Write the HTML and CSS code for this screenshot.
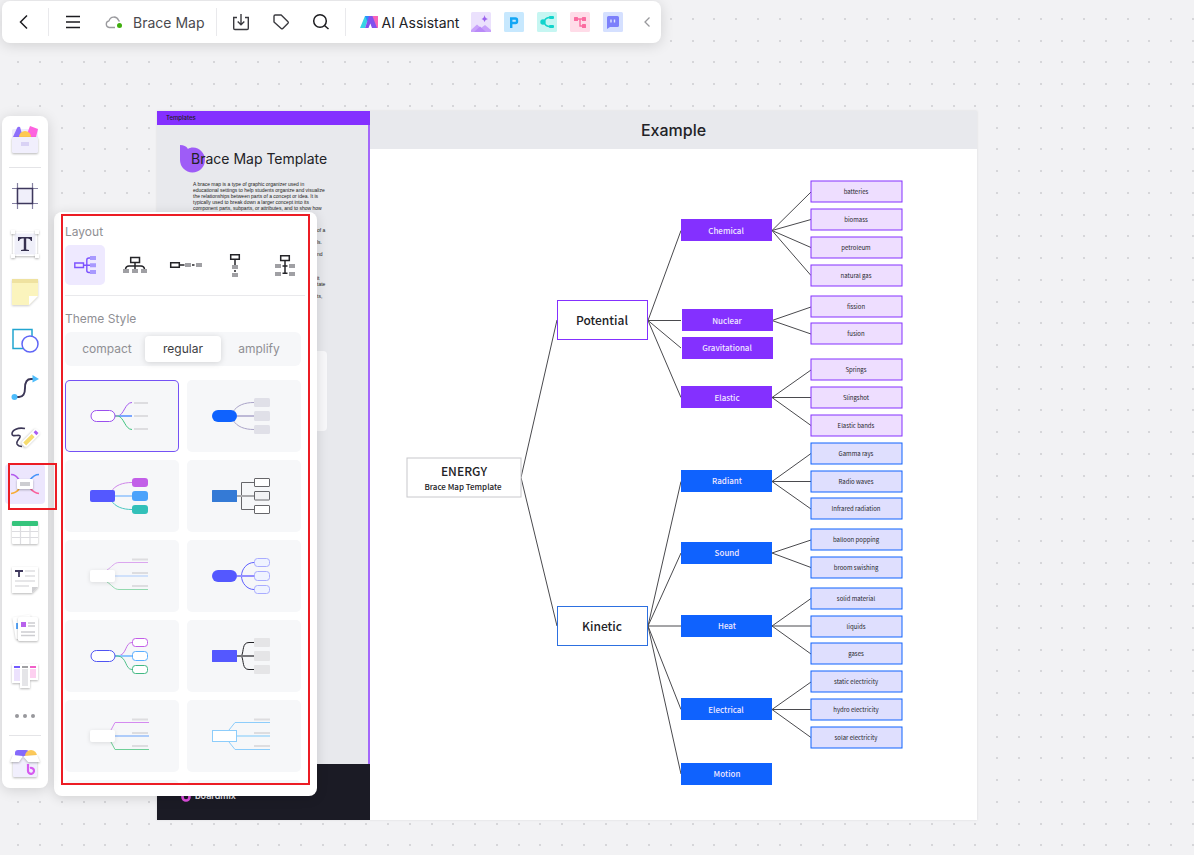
FILE: index.html
```html
<!DOCTYPE html>
<html lang="en">
<head>
<meta charset="utf-8">
<title>Brace Map</title>
<link rel="stylesheet" href="styles.css">
</head>
<body>
<main class="canvas">
  <svg class="dots" aria-hidden="true">
    <defs>
      <pattern id="grid" x="-26" y="18" width="87" height="87" patternUnits="userSpaceOnUse">
        <path d="M0 1h2M22 1h2M43 1h2M65 1h2M0 23h2M22 23h2M43 23h2M65 23h2M0 44h2M22 44h2M43 44h2M65 44h2M0 66h2M22 66h2M43 66h2M65 66h2" stroke="#d6d6d9" stroke-width="2"/>
      </pattern>
    </defs>
    <rect width="100%" height="100%" fill="url(#grid)"/>
  </svg>

  <section class="board">
    <article class="template">
      <div class="template-tag">Templates</div>
      <div class="template-body">
        <header class="template-head">
          <svg class="template-mark" width="26" height="28" viewBox="0 0 26 28"><path d="M0 0C4 0 6 1 8 4C9 3 11 2.500 13 2.500A12.500 12.500 0 1 1 0 15Z" fill="#9e5cf7"/></svg>
          <h1 class="template-title">Brace Map Template</h1>
        </header>
        <p class="template-text">A brace map is a type of graphic organizer used in<br>educational settings to help students organize and visualize<br>the relationships between parts of a concept or idea. It is<br>typically used to break down a larger concept into its<br>component parts, subparts, or attributes, and to show how</p>
        <p class="template-more">of a<br><br>ls.<br><br>nd<br><br><br><br>it<br>tate<br><br>ts,</p>
        <div class="template-card"></div>
      </div>
      <footer class="template-foot">
        <svg width="10" height="14" viewBox="0 0 10 14"><path d="M1.500 0V9A3.500 3.500 0 0 0 8.500 9A3.500 3.500 0 0 0 4 5.800" fill="none" stroke="#e04fe0" stroke-width="2.600"/><path d="M1.500 0V8" stroke="#8a4dff" stroke-width="2.600"/></svg>
        <span>boardmix</span>
      </footer>
    </article>
    <article class="example">
      <h2 class="example-title">Example</h2>
      <svg class="diagram" viewBox="370 149 607 671" width="607" height="671">
        <g class="links">
          <path d="M521 477.500L557 320M521 477.500L557 626"/>
          <path d="M648 320.500L681 230.500M648 320.500H681M648 320.500L681 348M648 320.500L681 397.500"/>
          <path d="M648 626L681 481.500M648 626L681 553M648 626H681M648 626L681 709.500M648 626L681 774"/>
          <path d="M772 230.500L811 192M772 230.500L811 219.500M772 230.500L811 247.500M772 230.500L811 275.500"/>
          <path d="M772 320.500L811 307M772 320.500L811 334"/>
          <path d="M772 397.500L811 370M772 397.500H811M772 397.500L811 425.500"/>
          <path d="M772 481.500L811 453.500M772 481.500H811M772 481.500L811 509"/>
          <path d="M772 553L811 540M772 553L811 567.500"/>
          <path d="M772 626L811 598.500M772 626H811M772 626L811 654"/>
          <path d="M772 709.500L811 682M772 709.500H811M772 709.500L811 737.500"/>
        </g>
        <g class="root"><rect x="407" y="458"/><text class="root-name" x="464" y="476">ENERGY</text><text class="root-sub" x="463" y="490">Brace Map Template</text></g>
        <g class="kind kind-purple"><rect x="557.500" y="300.500"/><text x="602" y="325">Potential</text></g>
        <g class="kind kind-blue"><rect x="557.500" y="606.500"/><text x="602" y="631">Kinetic</text></g>
        <g class="mid mid-purple">
          <rect x="681" y="219"/><text x="726" y="234">Chemical</text>
          <rect x="682" y="309"/><text x="727" y="324">Nuclear</text>
          <rect x="682" y="337"/><text x="727" y="351">Gravitational</text>
          <rect x="681" y="386"/><text x="727" y="401">Elastic</text>
        </g>
        <g class="mid mid-blue">
          <rect x="681" y="470"/><text x="727" y="484">Radiant</text>
          <rect x="681" y="542"/><text x="727" y="556">Sound</text>
          <rect x="681" y="615"/><text x="727" y="629">Heat</text>
          <rect x="681" y="698"/><text x="726" y="713">Electrical</text>
          <rect x="681" y="763"/><text x="727" y="777">Motion</text>
        </g>
        <g class="leaf leaf-purple">
          <rect x="811" y="181"/><text x="856" y="194">batteries</text>
          <rect x="811" y="209"/><text x="856" y="222">biomass</text>
          <rect x="811" y="237"/><text x="856" y="250">petroleum</text>
          <rect x="811" y="265"/><text x="856" y="278">natural gas</text>
          <rect x="811" y="296"/><text x="856" y="309">fission</text>
          <rect x="811" y="323"/><text x="856" y="336">fusion</text>
          <rect x="811" y="359"/><text x="856" y="372">Springs</text>
          <rect x="811" y="387"/><text x="856" y="400">Slingshot</text>
          <rect x="811" y="415"/><text x="856" y="428">Elastic bands</text>
        </g>
        <g class="leaf leaf-blue">
          <rect x="811" y="443"/><text x="856" y="456">Gamma rays</text>
          <rect x="811" y="471"/><text x="856" y="484">Radio waves</text>
          <rect x="811" y="498"/><text x="856" y="511">Infrared radiation</text>
          <rect x="811" y="529"/><text x="856" y="542">balloon popping</text>
          <rect x="811" y="557"/><text x="856" y="570">broom swishing</text>
          <rect x="811" y="588"/><text x="856" y="601">solid material</text>
          <rect x="811" y="616"/><text x="856" y="629">liquids</text>
          <rect x="811" y="643"/><text x="856" y="656">gases</text>
          <rect x="811" y="671"/><text x="856" y="684">static electricity</text>
          <rect x="811" y="699"/><text x="856" y="712">hydro electricity</text>
          <rect x="811" y="727"/><text x="856" y="740">solar electricity</text>
        </g>
      </svg>
    </article>
  </section>

  <header class="topbar">
    <button class="top-btn back" aria-label="Back"><svg width="20" height="20" viewBox="0 0 20 20"><path d="M13 3.500L6.500 10L13 16.500" class="ink"/></svg></button>
    <span class="vline"></span>
    <button class="top-btn" aria-label="Menu"><svg width="16" height="16" viewBox="0 0 16 16"><path d="M1 2.500H15M1 8H15M1 13.500H15" class="ink"/></svg></button>
    <button class="file"><svg width="18" height="18" viewBox="0 0 18 18"><path d="M10 14.500H4.200A3.400 3.400 0 0 1 4 7.800A5 5 0 0 1 13.500 7.200L14.500 8.500" fill="none" stroke="#9a9a9e" stroke-width="1.300"/><circle cx="14.500" cy="12.500" r="2.500" fill="#3fae0e"/></svg><span>Brace Map</span></button>
    <span class="vline"></span>
    <button class="top-btn" aria-label="Export"><svg width="18" height="18" viewBox="0 0 18 18"><path d="M5 4.500H1.700V15.300Q1.700 16.500 2.900 16.500H15.100Q16.300 16.500 16.300 15.300V4.500H13M9 1V11.500M5.700 8.500L9 11.700L12.300 8.500" class="ink-soft"/></svg></button>
    <button class="top-btn narrow" aria-label="Tag"><svg width="18" height="18" viewBox="0 0 18 18"><path d="M2 3.200Q2 2 3.200 2H9.200L16 8.700Q16.700 9.500 16 10.300L10.800 15.500Q10 16.200 9.200 15.500L2 9Z" class="ink-soft" stroke-linejoin="round"/></svg></button>
    <button class="top-btn" aria-label="Search"><svg width="18" height="18" viewBox="0 0 18 18"><circle cx="8" cy="8" r="6.300" class="ink"/><path d="M12.500 12.500L16.500 16" class="ink"/></svg></button>
    <span class="vline"></span>
    <button class="assistant">
      <svg width="18" height="14" viewBox="0 0 18 14"><path d="M12 1H18V13H16Z" fill="#f765b8"/><path d="M5 1H9L5 13H0Z" fill="#36d4e4"/><path d="M5 1H10L7.500 7Z" fill="#2e8cff"/><path d="M9 1H12.500L17 13H12L10.300 8.500L8.500 13H5Z" fill="#8052ee"/></svg>
      <span>AI Assistant</span>
    </button>
    <nav class="apps">
      <button class="app" aria-label="AI image"><svg width="20" height="20" viewBox="0 0 20 20"><rect width="20" height="20" rx="1.500" fill="#ebe1fd"/><path d="M0 18L6 12.500L10 16L14 13L20 18V20H0Z" fill="#c8a1fb"/><path d="M3 20L9 14.500L15 20Z" fill="#b98af8"/><path d="M13.500 3Q14 6.500 17 7Q14 7.500 13.500 10Q13 7.500 10.500 7Q13 6.500 13.500 3Z" fill="#9c63ee"/></svg></button>
      <button class="app" aria-label="AI presentation"><svg width="20" height="20" viewBox="0 0 20 20"><rect width="20" height="20" rx="1.500" fill="#c7e8fe"/><path d="M7.200 16V6.500H11.500Q13 6.500 13 8V9.500Q13 11 11.500 11H7" fill="none" stroke="#13a6f5" stroke-width="2.400"/></svg></button>
      <button class="app" aria-label="AI mind map"><svg width="20" height="20" viewBox="0 0 20 20"><rect width="20" height="20" rx="1.500" fill="#c6f6f2"/><path d="M16 5.500H12Q8 6 7 10Q8 14 12 14.500H16" fill="none" stroke="#12d4cc" stroke-width="1.500"/><circle cx="6" cy="10" r="2.700" fill="#12d4cc"/><rect x="12" y="4" width="5" height="3" rx="1" fill="#12d4cc"/><rect x="12" y="13" width="5" height="3" rx="1" fill="#12d4cc"/></svg></button>
      <button class="app" aria-label="AI flowchart"><svg width="20" height="20" viewBox="0 0 20 20"><rect width="20" height="20" rx="1.500" fill="#ffdce8"/><path d="M6 7H14M10 7V14H14" fill="none" stroke="#fb6ca0" stroke-width="1.400"/><rect x="4" y="5" width="4" height="4" rx=".6" fill="#fb6ca0"/><rect x="12" y="5" width="4" height="4" rx=".6" fill="#fb6ca0"/><rect x="12" y="12" width="4" height="4" rx=".6" fill="#fb6ca0"/></svg></button>
      <button class="app" aria-label="AI chat"><svg width="20" height="20" viewBox="0 0 20 20"><rect width="20" height="20" rx="1.500" fill="#d5e0ff"/><path d="M5.500 4H14.500Q16 4 16 5.500V13.500Q16 15 14.500 15H7L4 17V5.500Q4 4 5.500 4Z" fill="#7c80fb"/><path d="M8 7.500V10.500M11.500 7.500V10.500" stroke="#dfe6ff" stroke-width="1.400"/></svg></button>
    </nav>
    <button class="collapse" aria-label="Collapse"><svg width="10" height="12" viewBox="0 0 10 12"><path d="M7.500 1.500L3 6L7.500 10.500" fill="none" stroke="#98989c" stroke-width="1.300"/></svg></button>
  </header>

  <aside class="panel">
    <div class="panel-scroll">
      <h3 class="label">Layout</h3>
      <div class="layouts">
        <button class="layout active" aria-label="Brace"><svg width="40" height="40" viewBox="0 0 40 40"><path d="M9.800 18H18.500V22.500H9.800ZM19 20.200H25M25 13H24Q21.800 13 21.800 15V25.500Q21.800 27.500 24 27.500H25" fill="none" stroke="#7c52ff" stroke-width="1.400"/><path d="M25 13h6M25 20.200h6M25 27h6" stroke="#a899ff" stroke-width="4"/></svg></button>
        <button class="layout" aria-label="Tree"><svg width="40" height="40" viewBox="0 0 40 40"><path d="M15.700 12.500H24.500V17.500H15.700ZM20 18V24M10.500 24Q11 21 14 21H26Q29 21 29.500 24" class="tree-ink"/><path d="M8 26h6M17 26h6M26 26h6" class="tree-leaf"/></svg></button>
        <button class="layout" aria-label="Horizontal"><svg width="40" height="40" viewBox="0 0 40 40"><path d="M5.700 17.700H14.300V22.300H5.700ZM15 20H19.500M27 20H29.500" class="tree-ink"/><path d="M20 20h6M31 20h6" class="tree-leaf"/></svg></button>
        <button class="layout" aria-label="Vertical"><svg width="40" height="40" viewBox="0 0 40 40"><path d="M15.700 9.700H24.300V14.300H15.700ZM20 15V20M20 25V27" class="tree-ink"/><path d="M17 22h6M17 30h6" class="tree-leaf"/></svg></button>
        <button class="layout" aria-label="Stacked"><svg width="40" height="40" viewBox="0 0 40 40"><path d="M15.700 10.700H24.300V15.500H15.700ZM20 16V28.500M17.500 21H22.500M17.500 28.300H22.500" class="tree-ink"/><path d="M10 21h6M24 21h6M10 29h6M24 29h6" class="tree-leaf"/></svg></button>
      </div>
      <h3 class="label">Theme Style</h3>
      <div class="segments">
        <button class="segment">compact</button>
        <button class="segment active">regular</button>
        <button class="segment">amplify</button>
      </div>
      <div class="themes">
        <button class="theme active" aria-label="Theme 1"><svg viewBox="0 0 114 72"><g class="thin"><path d="M50 36H53C59 35 60 22.500 67 22.500" stroke="#a55bf0"/><path d="M54 36H67" stroke="#7aa6ff" stroke-width="2"/><path d="M50 36H53C59 37 60 49.500 67 49.500" stroke="#3fc47f"/><path d="M69 23h14M69 36h14M69 49h14" stroke="#dddde0" stroke-width="2"/><rect x="26" y="30.500" width="24" height="11" rx="5.500" fill="#fff" stroke="#9b50ee"/></g></svg></button>
        <button class="theme" aria-label="Theme 2"><svg viewBox="0 0 114 72"><g class="thin"><path d="M46 32C50 25 58 22.500 67 22.500M46 40C50 47 58 49.500 67 49.500" stroke="#aaa4c8"/><path d="M50 36H67" stroke="#bdb9d6" stroke-width="2"/></g><rect x="25" y="30" width="25" height="12" rx="6" fill="#0f62fe"/><g fill="#e0e0e8"><rect x="67" y="18" width="16" height="9" rx="1.500"/><rect x="67" y="31" width="16" height="10" rx="1.500"/><rect x="67" y="45" width="16" height="9" rx="1.500"/></g></svg></button>
        <button class="theme" aria-label="Theme 3"><svg viewBox="0 0 114 72"><g class="thin"><path d="M46 32C50 25 58 22.500 67 22.500" stroke="#cf86ea"/><path d="M46 40C50 47 58 49.500 67 49.500" stroke="#4ac7c0"/><path d="M50 36H67" stroke="#a9cffc" stroke-width="2"/></g><rect x="25" y="30" width="25" height="12" rx="2" fill="#5458ff"/><rect x="67" y="18" width="16" height="9" rx="3" fill="#c25fe8"/><rect x="67" y="31" width="16" height="10" rx="3" fill="#4ba2fb"/><rect x="67" y="45" width="16" height="9" rx="3" fill="#32c0b9"/></svg></button>
        <button class="theme" aria-label="Theme 4"><svg viewBox="0 0 114 72"><g class="thin" stroke="#66666a"><path d="M67 22.500H54.500V49.500H67"/><path d="M50 36H67" stroke="#a9a9ac" stroke-width="2"/><rect x="67.500" y="18.500" width="15" height="8" rx=".5" fill="#fff"/><rect x="67.500" y="31.500" width="15" height="8.500" rx=".5" fill="#f2f2f4"/><rect x="67.500" y="45.500" width="15" height="8" rx=".5" fill="#fff"/></g><rect x="25" y="30" width="25" height="12" rx=".5" fill="#347ad6"/></svg></button>
        <button class="theme" aria-label="Theme 5"><svg viewBox="0 0 114 72"><g class="thin"><path d="M42 30C47 27 49 22.500 54 22.500H83" stroke="#dba6ef"/><path d="M50 36H83" stroke="#d0e1fb" stroke-width="2"/><path d="M42 42C47 45 49 49.500 54 49.500H83" stroke="#93d9af"/><path d="M67 19.500h16M67 33h16M67 46h16" stroke="#dddde0" stroke-width="2"/></g><rect class="lifted" x="25" y="30" width="25" height="12" rx="2"/></svg></button>
        <button class="theme" aria-label="Theme 6"><svg viewBox="0 0 114 72"><g class="thin"><path d="M67 22.500C60 22.500 54.500 29 54.500 36S60 49.500 67 49.500" stroke="#5d5fff"/><path d="M50 36H67" stroke="#938fff" stroke-width="2"/><g fill="#eff3ff" stroke="#a9acff"><rect x="67.500" y="18.500" width="15" height="8" rx="3"/><rect x="67.500" y="31.500" width="15" height="9" rx="3"/><rect x="67.500" y="45.500" width="15" height="8" rx="3"/></g></g><rect x="25" y="30" width="25" height="12" rx="6" fill="#5458ff"/></svg></button>
        <button class="theme" aria-label="Theme 7"><svg viewBox="0 0 114 72"><g class="thin"><path d="M53 36C62 35 60 22.500 67 22.500" stroke="#c673e8"/><path d="M50 36H67" stroke="#8ec6ff" stroke-width="2"/><path d="M50 36H53C62 37 60 49.500 67 49.500" stroke="#50c18c"/><rect x="26" y="30.500" width="24" height="11" rx="5.500" fill="#fff" stroke="#5054f3"/><g fill="#fff"><rect x="67.500" y="18.500" width="15" height="8" rx="3" stroke="#c25fe8"/><rect x="67.500" y="31.500" width="15" height="9" rx="3" stroke="#5baeff"/><rect x="67.500" y="45.500" width="15" height="8" rx="3" stroke="#41b883"/></g></g></svg></button>
        <button class="theme" aria-label="Theme 8"><svg viewBox="0 0 114 72"><g class="thin"><path d="M67 22.500H62C55 22.500 57 31 54.500 36C57 41 55 49.500 62 49.500H67" stroke="#222226"/><path d="M50 36H67" stroke="#77777b" stroke-width="2"/></g><rect x="25" y="30" width="25" height="12" rx=".5" fill="#5458ff"/><g fill="#e5e5e7"><rect x="67" y="18" width="16" height="9" rx="1"/><rect x="67" y="31" width="16" height="10" rx="1"/><rect x="67" y="45" width="16" height="9" rx="1"/></g></svg></button>
        <button class="theme" aria-label="Theme 9"><svg viewBox="0 0 114 72"><g class="thin"><path d="M46 30L50 22.500H84" stroke="#d48af0"/><path d="M50 36H84" stroke="#aeccfa" stroke-width="2"/><path d="M46 42L50 49.500H84" stroke="#6fcf98"/><path d="M67 19.500h16M67 33h16M67 46h16" stroke="#dddde0" stroke-width="2"/></g><rect class="lifted" x="25" y="30" width="25" height="12" rx="2"/></svg></button>
        <button class="theme" aria-label="Theme 10"><svg viewBox="0 0 114 72"><g class="thin" stroke="#8dcdfb"><path d="M42 30L48 22.500H83M42 42L48 49.500H83"/><path d="M50 36H83" stroke="#b9e0fa" stroke-width="2"/><path d="M67 19.500h16M67 33h16M67 46h16" stroke="#dddde0" stroke-width="2"/><rect x="25.500" y="30.500" width="24" height="11" fill="#fff"/></g></svg></button>
        <button class="theme" aria-label="Theme 11"></button>
        <button class="theme" aria-label="Theme 12"></button>
      </div>
    </div>
  </aside>

  <nav class="sidebar">
    <button class="tool" aria-label="Resources"><svg viewBox="0 0 30 30"><rect x="2" y="4" width="26" height="20" rx="1.500" fill="#eeecfb"/><path d="M3 12L7 3Q8 1 10 2L13 12Z" fill="#8e6ffb"/><path d="M17 9L20 1L28 4L26 12H18Z" fill="#fd62df"/><circle cx="15" cy="12" r="6" fill="#fec953"/><rect class="raised tint" x="2" y="12" width="26" height="16" rx="1.500"/><rect x="11" y="17" width="8" height="4" fill="#d9d2f5"/></svg></button>
    <span class="hline"></span>
    <button class="tool" aria-label="Frame"><svg viewBox="0 0 30 30"><path d="M7.500 2V28M22.500 2V28M2 7.500H28M2 22.500H28" stroke="#8682a3" stroke-width="1.200"/><rect x="7.500" y="7.500" width="15" height="15" fill="#f0effa" stroke="#3d375c" stroke-width="1.500"/></svg></button>
    <button class="tool" aria-label="Text"><svg viewBox="0 0 30 30"><rect class="raised" x="3" y="3" width="24" height="24"/><rect x="4.500" y="4.500" width="21" height="21" fill="#efeff9"/><g class="raised"><rect x="1" y="1" width="4" height="4"/><rect x="25" y="1" width="4" height="4"/><rect x="1" y="25" width="4" height="4"/><rect x="25" y="25" width="4" height="4"/></g><path d="M8 8H22V12H21Q20.500 9.700 18 9.500H16.200V20.500L19 21V22H11V21L13.800 20.500V9.500H12Q9.500 9.700 9 12H8Z" fill="#35304f"/></svg></button>
    <button class="tool" aria-label="Sticky note"><svg viewBox="0 0 30 30"><path class="note" d="M2 2H28V19L19 28H2Z"/><path d="M2 2H28V6H2Z" fill="#efe2a0"/><path d="M28 19H19V28Z" fill="#fff"/></svg></button>
    <button class="tool" aria-label="Shape"><svg viewBox="0 0 30 30"><rect x="3" y="4.500" width="19" height="19" fill="#fff" stroke="#22a5d0" stroke-width="1.500"/><circle cx="20" cy="19" r="8" fill="#fff" stroke="#5f65f6" stroke-width="1.500"/></svg></button>
    <button class="tool" aria-label="Connector"><svg viewBox="0 0 30 30"><path d="M4 24H9Q15 24 15 15Q15 6 21 6H23" fill="none" stroke="#3b3656" stroke-width="1.900"/><circle cx="4.500" cy="24" r="3" fill="#4dbcfb"/><path d="M22.500 2L29 6L22.500 9.500Z" fill="#4dbcfb"/></svg></button>
    <button class="tool" aria-label="Pen"><svg viewBox="0 0 30 30"><path d="M15 7.500C8 6 2 9 2 13C2 17 11 12 10 16C9 19 6 20 7 23C8 25 10 25.500 12 25.500" fill="none" stroke="#3b3656" stroke-width="1.600"/><g transform="rotate(45 20 17)"><rect class="raised" x="17" y="6" width="7" height="21" rx="2"/><rect x="18.500" y="13" width="4" height="12" fill="#f6dc6d"/><rect x="18.500" y="7.500" width="4" height="3" fill="#a95cf3"/></g></svg></button>
    <button class="tool" aria-label="Mind map"><svg class="lit" viewBox="-5 -5 40 40"><g fill="none" stroke-width="1.700"><path d="M1 5.500Q6 5.500 9 11" stroke="#b25cee"/><path d="M29 5.500Q24 5.500 20 11" stroke="#4795fa"/><path d="M1 24.500Q6 24 9 20" stroke="#f8ad35"/><path d="M29 24.500Q24 24 20 19" stroke="#fb5f9b"/></g><rect class="raised" x="7" y="10" width="16" height="10" rx="1"/><rect x="10" y="13" width="10" height="4" fill="#cdcdd1"/></svg></button>
    <button class="tool" aria-label="Table"><svg viewBox="0 0 30 30"><rect class="raised" x="2" y="4" width="26" height="23" rx="1"/><rect x="2" y="4" width="26" height="5" rx="1" fill="#35c47c"/><path d="M10.500 9V27M20 9V27M2 14.500H28M2 20.500H28" stroke="#dcdce0" stroke-width="1.200"/></svg></button>
    <button class="tool" aria-label="Document"><svg viewBox="0 0 30 30"><path class="raised" d="M2 2H28V22L22 28H2Z"/><path d="M28 22H22V28Z" fill="#cfcfd2"/><path d="M5 6H13M9 6V12" stroke="#3d375c" stroke-width="1.800"/><path d="M15 6H25M15 11H25M5 16H25M5 21H19" stroke="#dedee1" stroke-width="1.300"/></svg></button>
    <button class="tool" aria-label="Cards"><svg viewBox="0 0 30 30"><rect class="raised" x="4" y="3" width="18" height="22" rx="1" transform="rotate(-9 13 14)"/><rect x="6" y="10" width="3" height="6" fill="#5ba8fc"/><rect class="raised" x="8" y="4" width="20" height="24" rx="1.500"/><rect x="11" y="9" width="5" height="5" fill="#b862ec"/><path d="M18 10H25M18 13H25M11 19H25M11 22.500H25" stroke="#cdcdd1" stroke-width="1.300"/></svg></button>
    <button class="tool" aria-label="Kanban"><svg viewBox="0 0 30 30"><path class="raised" d="M2 3H28V19H20V27H10V22H2Z"/><path d="M4 6H10" stroke="#7159ff" stroke-width="2"/><path d="M12 6H18" stroke="#a0a0a3" stroke-width="2"/><path d="M20 6H26" stroke="#f05fc8" stroke-width="2"/><rect x="4" y="8" width="6" height="12" fill="#ece2fd"/><rect x="12" y="8" width="6" height="17" fill="#e5e5e8"/><rect x="20" y="8" width="6" height="9" fill="#fdd0f0"/></svg></button>
    <button class="more" aria-label="More"><svg width="22" height="6" viewBox="0 0 22 6"><g fill="#98989c"><circle cx="3" cy="3" r="2"/><circle cx="11" cy="3" r="2"/><circle cx="19" cy="3" r="2"/></g></svg></button>
    <span class="hline"></span>
    <button class="tool" aria-label="Apps"><svg viewBox="0 0 30 30"><rect x="5" y="1" width="14" height="7" rx="3" fill="#856afc"/><circle cx="21" cy="7" r="6" fill="#fcc95a"/><rect class="raised tint" x="3" y="8" width="24" height="20" rx="1"/><path class="raised" d="M3 6L0 13H9L13 7ZM27 6L30 13H18L13 7Z"/><path d="M18 15V22A3 3 0 1 0 20 19" fill="none" stroke="#d65af0" stroke-width="2.200"/></svg></button>
  </nav>

  <div class="mark mark-panel"></div>
  <div class="mark mark-tool"></div>
</main>
</body>
</html>
```
FILE: styles.css
```css
* { box-sizing: border-box; }
body { margin: 0; font-family: Inter, "Liberation Sans", sans-serif; color: #222226; }
button { margin: 0; padding: 0; border: 0; background: none; font: inherit; color: inherit; cursor: pointer; }
h1, h2, h3, p { margin: 0; font-weight: 400; }
svg { display: block; flex: none; }

.canvas { position: relative; height: 100vh; min-height: 840px; overflow: hidden; background: #f2f2f4; }
.dots { position: absolute; inset: 0; width: 100%; height: 100%; }

/* Board */
.board { position: absolute; left: 157px; top: 111px; display: flex; box-shadow: 0 0 2px #d8d8dc; }
.template { display: flex; flex-direction: column; width: 213px; background: #e8e9ed; }
.template-tag { height: 14px; padding-left: 9px; background: #8430ff; font-size: 6px; font-weight: 500; line-height: 13px; }
.template-body { position: relative; flex: 1; padding: 19px 0 0 23px; border-right: 2px solid #a468fb; }
.template-head { display: grid; align-items: center; height: 30px; }
.template-mark { grid-area: 1 / 1; }
.template-title { grid-area: 1 / 1; padding-left: 11px; font-size: 14px; line-height: 20px; }
.template-text, .template-more { font-family: "Liberation Sans", sans-serif; font-size: 5px; line-height: 6px; white-space: nowrap; color: #1c1c20; }
.template-text { padding: 7px 0 0 13px; }
.template-more { padding: 16px 0 0 137px; }
.template-card { position: absolute; right: 41px; top: 226px; width: 90px; height: 80px; border-radius: 4px; background: #f8f8fa; }
.template-foot { display: flex; gap: 4px; height: 56px; padding: 24px 0 0 24px; background: #1b1b25; color: #e8e8ec; font-size: 9px; line-height: 16px; font-weight: 600; }
.example { display: flex; flex-direction: column; background: #fff; }
.example-title { height: 38px; background: #e8e9ed; text-align: center; font-size: 16px; line-height: 39px; font-weight: 500; }

/* Diagram */
.diagram { font-family: "Noto Sans CJK SC", "Noto Sans", sans-serif; text-anchor: middle; }
.links { fill: none; stroke: #4a4a4e; stroke-width: 1; }
.root rect { width: 114px; height: 39px; fill: #fff; stroke: #c8c8cc; stroke-width: 1px; }
.root text { fill: #222226; font-weight: 500; }
.root-name { font-size: 12px; }
.root-sub { font-size: 8px; }
.kind rect { width: 90px; height: 39px; fill: #fff; }
.kind text { font-size: 12px; font-weight: 500; fill: #222226; }
.kind-purple rect { stroke: #8430ff; }
.kind-blue rect { stroke: #2d70e0; }
.mid rect { width: 91px; height: 22px; }
.mid text { font-size: 8px; font-weight: 500; fill: #f1e8ff; }
.mid-purple { fill: #8430ff; }
.mid-blue { fill: #0f62fe; }
.leaf rect { width: 91px; height: 21px; stroke-width: 1px; }
.leaf text { font-size: 6px; fill: #25252a; }
.leaf-purple rect { fill: #eedeff; stroke: #8430ff; }
.leaf-blue rect { fill: #dfdffe; stroke: #0f62fe; }

/* Top bar */
.topbar { position: absolute; left: 2px; top: 1px; display: flex; align-items: center; height: 42px; border-radius: 8px; background: #fff; box-shadow: 0 2px 14px #00000024; }
.top-btn { display: flex; justify-content: center; align-items: center; width: 48px; height: 42px; }
.top-btn.back { width: 46px; padding-right: 2px; }
.top-btn.narrow { width: 32px; }
.vline { width: 1px; height: 28px; background: #e9e9ec; }
.ink { fill: none; stroke: #1c1c20; stroke-width: 1.5; }
.ink-soft { fill: none; stroke: #3a3a3f; stroke-width: 1.4; }
.file { display: flex; align-items: center; gap: 10px; padding: 0 12px 0 8px; color: #4a4a4f; font-size: 14px; }
.assistant { display: flex; align-items: center; gap: 3px; padding: 0 12px 0 14px; font-size: 14px; }
.apps { display: flex; gap: 13px; }
.collapse { display: flex; justify-content: center; width: 38px; padding-left: 10px; }

/* Side bar */
.sidebar { position: absolute; left: 2px; top: 116px; display: flex; flex-direction: column; align-items: center; width: 46px; border-radius: 8px; background: #fff; box-shadow: 0 2px 14px #00000024; }
.tool { display: flex; justify-content: center; align-items: center; width: 46px; height: 48px; }
.tool svg { width: 30px; height: 30px; overflow: visible; }
.tool svg.lit { width: 40px; height: 40px; border-radius: 4px; background: #ece6fd; }
.hline { width: 32px; height: 1px; margin: 3px 0 4px; background: #e4e4e7; }
.more { display: flex; justify-content: center; align-items: center; width: 46px; height: 32px; }
.raised { fill: #fff; filter: drop-shadow(0 1px 1px #00000048); }
.raised.tint { fill: #f1effd; }
.lifted { fill: #fff; filter: drop-shadow(0 1px 2px #0000001c); }
.note { fill: #fbf4bd; filter: drop-shadow(0 1px 1px #00000033); }

/* Style panel */
.panel { position: absolute; left: 54px; top: 212px; width: 263px; height: 584px; padding: 12px 11px; border-radius: 8px; background: #fff; box-shadow: 0 2px 12px #00000024; }
.panel-scroll { height: 560px; overflow: hidden; }
.label { color: #8f8f94; font-size: 12px; line-height: 16px; }
.layouts { display: flex; gap: 10px; width: 240px; margin: 5px 0 15px; padding-bottom: 10px; border-bottom: 1px solid #e9e9ec; }
.layout { width: 40px; height: 40px; border-radius: 5px; }
.layout.active { background: #eee9ff; }
.tree-ink { fill: none; stroke: #242428; stroke-width: 1.5; }
.tree-leaf { stroke: #a0a0a4; stroke-width: 4; }
.segments { display: flex; width: 236px; height: 34px; margin-top: 5px; padding: 4px; border-radius: 6px; background: #f6f7f9; }
.segment { flex: 1; border-radius: 4px; color: #8f8f94; font-size: 12px; line-height: 26px; }
.segment.active { background: #fff; color: #3d3d42; box-shadow: 0 1px 6px #00000026; }
.themes { display: grid; grid-template-columns: 1fr 1fr; gap: 8px; width: 236px; margin-top: 14px; }
.theme { height: 72px; border-radius: 5px; background: #f6f7f9; }
.theme.active { box-shadow: inset 0 0 0 1px #7552f5; }
.theme svg { width: 114px; height: 72px; }
.thin { fill: none; stroke-width: 1; }

/* Callout outlines */
.mark { position: absolute; border: 2px solid #ec1c24; pointer-events: none; }
.mark-panel { left: 61px; top: 214px; width: 249px; height: 571px; }
.mark-tool { left: 8px; top: 463px; width: 49px; height: 47px; }
```
